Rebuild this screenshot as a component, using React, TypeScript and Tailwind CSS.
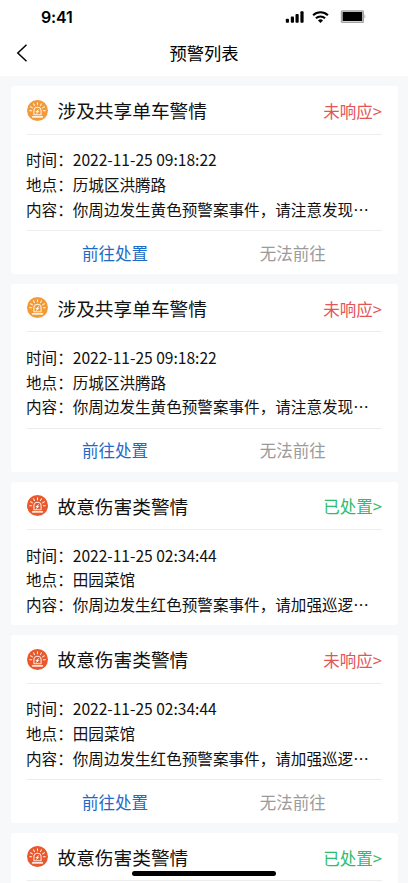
import React from "react";

type Alert = {
  id: number;
  level: "yellow" | "red";
  title: string;
  handled: boolean;
  time: string;
  place: string;
  content: string;
};

const bikeAlert = {
  level: "yellow" as const,
  title: "涉及共享单车警情",
  time: "2022-11-25 09:18:22",
  place: "历城区洪腾路",
  content: "你周边发生黄色预警案事件，请注意发现…",
};

const injuryAlert = {
  level: "red" as const,
  title: "故意伤害类警情",
  time: "2022-11-25 02:34:44",
  place: "田园菜馆",
  content: "你周边发生红色预警案事件，请加强巡逻…",
};

const alerts: Alert[] = [
  { id: 1, ...bikeAlert, handled: false },
  { id: 2, ...bikeAlert, handled: false },
  { id: 3, ...injuryAlert, handled: true },
  { id: 4, ...injuryAlert, handled: false },
  { id: 5, ...injuryAlert, handled: true },
];

function StatusBar() {
  return (
    <div className="flex h-[33px] items-center justify-between pl-[41px] pr-[42px]">
      <span className="font-['Inter',sans-serif] text-[16px] font-semibold tracking-[-0.2px]">9:41</span>
      <div className="flex items-center">
        <svg width="19" height="12" viewBox="0 0 19 12" className="mr-[8px]">
          <rect x="0.8" y="7.7" width="3.2" height="4" rx="0.9" />
          <rect x="5.8" y="5.6" width="3.2" height="6.1" rx="0.9" />
          <rect x="10.5" y="3" width="3.2" height="8.7" rx="0.9" />
          <rect x="15.4" y="0.3" width="3.2" height="11.4" rx="0.9" />
        </svg>
        <svg width="17" height="12" viewBox="0 0 17 12" fill="none" stroke="#000" className="mr-[11px]">
          <path d="M1.1 4.3a10.6 10.6 0 0 1 14.8 0" strokeWidth="2.1" />
          <path d="M3.9 7.3a6.6 6.6 0 0 1 9.2 0" strokeWidth="2" />
          <path d="M8.5 12 6 9.5a3.5 3.5 0 0 1 5 0z" fill="#000" stroke="none" />
        </svg>
        <svg width="26" height="13" viewBox="0 0 26 13">
          <rect x="1.5" y="1" width="21.8" height="11.2" rx="0.8" fill="#fff" stroke="#a3a3a3" strokeWidth="1.4" />
          <rect x="2.6" y="2.1" width="19.6" height="9" rx="0.5" />
          <path d="M24.5 4.6v4c1.2-.7 1.2-3.3 0-4z" fill="#a3a3a3" />
        </svg>
      </div>
    </div>
  );
}

function SirenIcon({ level }: { level: Alert["level"] }) {
  return (
    <svg width="21" height="21" viewBox="0 0 21 21" className="-mt-px shrink-0">
      <circle cx="10.5" cy="10.5" r="10.5" fill={level === "red" ? "#e9582b" : "#f39a38"} />
      <g stroke="#fff" strokeOpacity="0.85" strokeWidth="1.1" strokeLinecap="round" fill="none">
        <path d="M10.5 2.8v2M6.5 3.8l1 1.8M14.5 3.8l-1 1.8M3.6 6.7l1.8 1.2M17.4 6.7 15.6 7.9M2.8 10.6l1.8.1M18.2 10.6l-1.8.1" />
        <path d="M6.9 14.8v-4a3.6 3.6 0 0 1 7.2 0v4z" />
        <path d="M5.6 16.9h9.8" strokeWidth="1.6" />
      </g>
      <path d="m12.2 8.8-3.9 3.3h1.6l-1.1 2.5 3.6-3.4h-1.5z" fill="#fff" />
    </svg>
  );
}

function Row({ label, value }: { label: string; value: string }) {
  return (
    <p className="-ml-[0.5px] whitespace-nowrap text-[15.58px] leading-[24.7px]">
      {label}：{value}
    </p>
  );
}

function AlertCard({ alert }: { alert: Alert }) {
  return (
    <section className="rounded-[3px] bg-white px-[16px]">
      <div className="flex h-[48.5px] items-center border-b border-[#ededee] pt-[1.5px]">
        <SirenIcon level={alert.level} />
        <h2 className="-mt-px ml-[10px] flex-1 text-[18.7px]">{alert.title}</h2>
        <span className={`pt-px text-[16.5px] ${alert.handled ? "text-[#2dbd6e]" : "text-[#e45656]"}`}>
          {alert.handled ? "已处置" : "未响应"}&gt;
        </span>
      </div>
      <div className="pb-[8.7px] pt-[12.6px]">
        <Row label="时间" value={alert.time} />
        <Row label="地点" value={alert.place} />
        <Row label="内容" value={alert.content} />
      </div>
      {!alert.handled && (
        <div className="flex h-[44px] border-t border-[#ededee] pt-px text-[16.5px]">
          <button className="flex-1 pr-px text-[#1d6bc6]">前往处置</button>
          <button className="flex-1 pr-px text-[#9b9b9b]">无法前往</button>
        </div>
      )}
    </section>
  );
}

export default function App(): React.ReactElement {
  return (
    <div
      lang="zh-CN"
      className="relative h-[883px] overflow-hidden bg-[#f7f8fa] font-['Noto_Sans_CJK_SC',sans-serif] text-[#111]"
    >
      <header className="h-[76px] bg-white text-black">
        <StatusBar />
        <div className="grid h-[40px] grid-cols-[60px_1fr_60px] items-center">
          <svg width="12" height="20" viewBox="0 0 12 20" fill="none" stroke="#000" strokeWidth="1.5" className="ml-[16px]">
            <path d="M10.5 1.8 1.8 10l8.7 8.2" />
          </svg>
          <h1 className="text-center text-[17.3px]">预警列表</h1>
        </div>
      </header>

      <main className="flex flex-col gap-[9.8px] pl-[10.5px] pr-[10px] pt-[10.2px]">
        {alerts.map((alert) => (
          <AlertCard key={alert.id} alert={alert} />
        ))}
      </main>

      {/* home indicator */}
      <div className="absolute bottom-[7px] left-[132px] h-[5px] w-[144px] rounded-full bg-black" />
    </div>
  );
}
